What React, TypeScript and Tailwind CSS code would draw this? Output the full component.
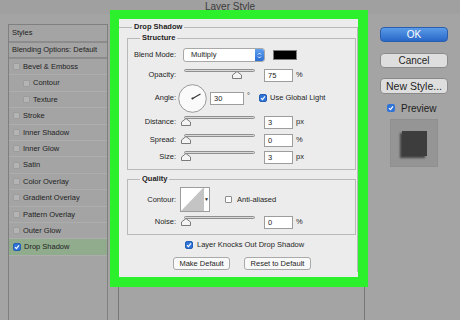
import React from "react";

const listItems = [
  { name: "Bevel & Emboss", indent: false },
  { name: "Contour", indent: true },
  { name: "Texture", indent: true },
  { name: "Stroke", indent: false },
  { name: "Inner Shadow", indent: false },
  { name: "Inner Glow", indent: false },
  { name: "Satin", indent: false },
  { name: "Color Overlay", indent: false },
  { name: "Gradient Overlay", indent: false },
  { name: "Pattern Overlay", indent: false },
  { name: "Outer Glow", indent: false },
  { name: "Drop Shadow", indent: false, checked: true },
];

const GrayBox = () => (
  <span className="block w-[7px] h-[7px] rounded-[1px] border border-[#9c9c9c] bg-[#b4b4b4]" />
);

const BlueCheck = () => (
  <span className="flex items-center justify-center w-[8px] h-[8px] rounded-[2px] bg-[#2f74d6] border border-[#245fb5]">
    <svg width="6" height="6" viewBox="0 0 6 6">
      <path d="M1 3.2 L2.4 4.6 L5 1.3" stroke="white" strokeWidth="1.2" fill="none" />
    </svg>
  </span>
);

const Slider = ({ pos }: { pos: number }) => (
  <div className="relative w-[71px] h-[14px]">
    <div className="mt-[1px] h-[3px] rounded-full bg-[#d9d9d9] border border-[#8f8f8f]" />
    <svg
      className="absolute top-[2px]"
      style={{ left: pos - 5 }}
      width="10"
      height="8"
      viewBox="0 0 10 8"
    >
      <path d="M5 0.5 L9.5 4 L9.5 7.5 L0.5 7.5 L0.5 4 Z" fill="#f4f4f4" stroke="#7b7b7b" strokeWidth="1" />
    </svg>
  </div>
);

const NumBox = ({ value, w = "w-[29px]" }: { value: string; w?: string }) => (
  <div className={`${w} h-[13px] border border-[#9d9d9d] bg-white pl-[3px] text-[7.5px] leading-[11px]`}>
    {value}
  </div>
);

const SliderRow = ({
  label,
  pos,
  value,
  unit,
  className,
}: {
  label: string;
  pos: number;
  value: string;
  unit: string;
  className: string;
}) => (
  <div className={`flex items-center h-[14px] ${className}`}>
    <span className="w-[48px] text-right">{label}</span>
    <div className="ml-[8px] self-start">
      <Slider pos={pos} />
    </div>
    <div className="ml-[9px]">
      <NumBox value={value} />
    </div>
    <span className="ml-[3px]">{unit}</span>
  </div>
);

const App = () => {
  return (
    <div className="w-[460px] h-[320px] overflow-hidden bg-[#a4a4a4] flex flex-col font-['Liberation_Sans',Arial,sans-serif] text-[#1e1e1e]">
      <div className="h-[14px] shrink-0 bg-[#a0a0a0] text-center text-[10px] leading-[14px] text-[#3a3a3a]">
        Layer Style
      </div>

      <div className="flex flex-1 min-h-0">
        {/* left styles list */}
        <div className="ml-[8px] mt-[10px] w-[100px] border-x border-t border-[#7f7f7f] text-[7.5px]">
          <div className="h-[18px] flex items-center pl-[3px] border-b-2 border-[#8c8c8c]">Styles</div>
          <div className="h-[16px] flex items-center pl-[3px] border-b-2 border-[#8c8c8c]">
            Blending Options: Default
          </div>
          {listItems.map((item) => (
            <div
              key={item.name}
              className={`h-[16.4px] flex items-center border-b border-[#adadad] ${
                item.indent ? "pl-[14px]" : "pl-[4px]"
              } ${item.checked ? "bg-[#90ac8d]" : ""}`}
            >
              {item.checked ? <BlueCheck /> : <GrayBox />}
              <span className="ml-[3px]">{item.name}</span>
            </div>
          ))}
        </div>

        {/* center settings panel */}
        <div className="ml-[10px] w-[247px] border-x border-[#777]">
          <div className="-mt-[4px] -ml-[9px] -mr-[4px] h-[277px] border-[#2df02d] border-l-[9px] border-t-[9px] border-r-[10px] border-b-[10px] bg-[#ececec] pt-[3px] text-[7.5px]">
            <fieldset className="border-t border-r border-[#b9b9b9] h-[250px]">
              <legend className="ml-[13px] px-[2px] font-bold leading-[10px]">Drop Shadow</legend>

              <fieldset className="ml-[8px] mr-[1px] mt-[1px] border border-[#b9b9b9] pt-[5px] pb-[5px]">
                <legend className="ml-[12px] px-[2px] font-bold leading-[10px]">Structure</legend>

                <div className="flex items-center h-[14px]">
                  <span className="w-[48px] text-right">Blend Mode:</span>
                  <div className="ml-[7px] w-[82px] h-[14px] flex items-center rounded-[3px] border border-[#a8a8a8] bg-white overflow-hidden">
                    <span className="flex-1 pl-[7px]">Multiply</span>
                    <span className="w-[9px] h-full flex items-center justify-center bg-gradient-to-b from-[#5fa0ee] to-[#2a6ed4]">
                      <svg width="5" height="9" viewBox="0 0 5 9">
                        <path d="M1 3.5 L2.5 2 L4 3.5 M1 5.5 L2.5 7 L4 5.5" stroke="white" strokeWidth="0.9" fill="none" />
                      </svg>
                    </span>
                  </div>
                  <div className="ml-[8px] w-[24px] h-[10px] bg-black border border-[#7d7d7d]" />
                </div>

                <SliderRow className="mt-[6px]" label="Opacity:" pos={53} value="75" unit="%" />

                <div className="flex items-center h-[28px] mt-[2px]">
                  <span className="w-[48px] text-right">Angle:</span>
                  <svg className="ml-[2px]" width="29" height="29" viewBox="0 0 29 29">
                    <circle cx="14.5" cy="14.5" r="13.8" fill="#fafafa" stroke="#8e8e8e" strokeWidth="0.9" />
                    <line x1="14.5" y1="14.5" x2="22.5" y2="10" stroke="#333" strokeWidth="1.1" />
                    <circle cx="14.5" cy="14.5" r="1.1" fill="#333" />
                  </svg>
                  <div className="ml-[3px]">
                    <NumBox value="30" w="w-[34px]" />
                  </div>
                  <span className="ml-[3px] -mt-[4px]">°</span>
                  <span className="ml-[9px]">
                    <BlueCheck />
                  </span>
                  <span className="ml-[3px]">Use Global Light</span>
                </div>

                <SliderRow className="mt-[3px]" label="Distance:" pos={2} value="3" unit="px" />
                <SliderRow className="mt-[4px]" label="Spread:" pos={2} value="0" unit="%" />
                <SliderRow className="mt-[3px]" label="Size:" pos={2} value="3" unit="px" />
              </fieldset>

              <fieldset className="ml-[8px] mr-[1px] mt-[4px] border border-[#b9b9b9] pt-[3px] pb-[5px]">
                <legend className="ml-[12px] px-[2px] font-bold leading-[10px]">Quality</legend>

                <div className="flex items-center h-[25px]">
                  <span className="w-[48px] text-right">Contour:</span>
                  <div className="ml-[4px] flex h-[25px] border border-[#9d9d9d] bg-white">
                    <svg width="22" height="23" viewBox="0 0 22 23">
                      <path d="M0 23 L22 0 L22 23 Z" fill="#c4c4c4" />
                    </svg>
                    <span className="w-[6px] border-l border-[#c2c2c2] flex items-center justify-center text-[5px]">▼</span>
                  </div>
                  <span className="ml-[15px] w-[7px] h-[7px] rounded-[1px] border border-[#8d8d8d] bg-white" />
                  <span className="ml-[5px]">Anti-aliased</span>
                </div>

                <SliderRow className="mt-[3px]" label="Noise:" pos={2} value="0" unit="%" />
              </fieldset>

              <div className="flex items-center h-[10px] mt-[5px] ml-[66px]">
                <BlueCheck />
                <span className="ml-[4px]">Layer Knocks Out Drop Shadow</span>
              </div>

              <div className="flex mt-[7px] ml-[54px] gap-[14px]">
                <div className="w-[57px] h-[13px] rounded-[3px] border border-[#a9a9a9] bg-[#f9f9f9] text-center leading-[11px]">
                  Make Default
                </div>
                <div className="w-[67px] h-[13px] rounded-[3px] border border-[#a9a9a9] bg-[#f9f9f9] text-center leading-[11px]">
                  Reset to Default
                </div>
              </div>
            </fieldset>
          </div>
        </div>

        {/* right buttons */}
        <div className="flex-1 flex flex-col pl-[15px]">
          <div className="mt-[13px] w-[68px] h-[15px] rounded-[4px] bg-gradient-to-b from-[#5b9be8] to-[#2867c7] border border-[#2a5fae] text-white text-center text-[10px] leading-[13px]">
            OK
          </div>
          <div className="mt-[11px] w-[68px] h-[15px] rounded-[4px] bg-[#dedede] border border-[#8a8a8a] text-center text-[10px] leading-[13px]">
            Cancel
          </div>
          <div className="mt-[10px] w-[68px] h-[16px] rounded-[4px] bg-[#dedede] border border-[#8a8a8a] text-center text-[10.5px] leading-[14px]">
            New Style...
          </div>
          <div className="mt-[9px] flex items-center h-[10px] ml-[7px]">
            <span className="flex items-center justify-center w-[8px] h-[8px] rounded-[2px] bg-[#2f74d6]">
              <svg width="6" height="6" viewBox="0 0 6 6">
                <path d="M1 3.2 L2.4 4.6 L5 1.3" stroke="white" strokeWidth="1.2" fill="none" />
              </svg>
            </span>
            <span className="ml-[6px] text-[10px]">Preview</span>
          </div>
          <div className="mt-[6px] ml-[10px] w-[48px] h-[48px] bg-[#959595] border border-[#8f8f8f] flex items-center justify-center">
            <div className="w-[25px] h-[25px] bg-[#3d3d3d] shadow-[-2px_2px_2px_rgba(0,0,0,0.55)]" />
          </div>
        </div>
      </div>
    </div>
  );
};

export default App;
